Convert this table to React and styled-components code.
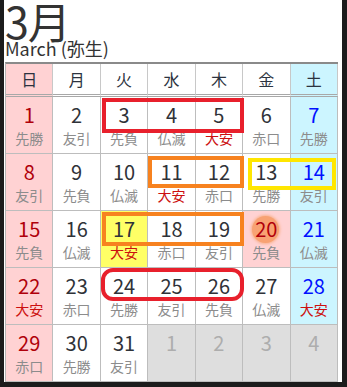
import styled, { createGlobalStyle } from 'styled-components';

const GlobalStyle = createGlobalStyle`
  html, body {
    margin: 0;
    padding: 0;
    background: #1c1c1c;
  }
  body {
    font-family: "Noto Sans CJK JP", "Noto Sans", sans-serif;
  }
`;

const Page = styled.div`
  width: 338px;
  margin-left: 4px;
  background: #fff;
  color: #333;
`;

const MonthTitle = styled.div`
  font-size: 43px;
  line-height: 40px;
  height: 38px;
  padding-left: 1px;
  letter-spacing: -1px;
  color: #333;
`;

const MonthSub = styled.div`
  font-size: 18px;
  line-height: 20px;
  padding-left: 1px;
  color: #333;
`;

const Grid = styled.div`
  display: grid;
  width: 332px;
  margin: 4px 0 0 1px;
  grid-template-columns: repeat(7, 1fr);
  grid-template-rows: 33px repeat(5, 57px);
  border-top: 2px solid #8a8a8a;
  border-left: 1px solid #b5b5b5;
`;

const HeadCell = styled.div`
  grid-row: 1;
  grid-column: ${p => p.$col};
  display: flex;
  align-items: center;
  justify-content: center;
  font-size: 16px;
  color: #2c3340;
  border-right: 1px solid #c8c8c8;
  border-bottom: 3px double #a8a8a8;
  background: ${p => (p.$col === 1 ? '#ffd2d3' : p.$col === 7 ? '#ccf5ff' : '#fff')};
`;

const dayBg = p => {
  if (p.$other) return '#dedede';
  if (p.$yellow) return '#ffff66';
  if (p.$holiday || p.$col === 1) return '#ffd2d3';
  if (p.$col === 7) return '#ccf5ff';
  return '#fff';
};

const DayCell = styled.div`
  grid-row: ${p => p.$row};
  grid-column: ${p => p.$col};
  display: flex;
  flex-direction: column;
  align-items: center;
  padding-top: 4px;
  border-right: 1px solid #bdbdbd;
  border-bottom: 1px solid #bdbdbd;
  background: ${dayBg};
`;

const numColor = p => {
  if (p.$other) return '#adadad';
  if (p.$holiday || p.$col === 1) return '#b0000a';
  if (p.$col === 7) return '#0010ff';
  return '#2f3238';
};

const DayNum = styled.div`
  position: relative;
  font-size: 20px;
  line-height: 28px;
  color: ${numColor};
  z-index: 1;

  &::before {
    content: '';
    display: ${p => (p.$holiday ? 'block' : 'none')};
    position: absolute;
    left: 50%;
    top: 50%;
    width: 27px;
    height: 27px;
    margin: -13px 0 0 -14px;
    border-radius: 50%;
    background: #f8a273;
    box-shadow: 0 0 3px 1px #f8b08a;
    z-index: -1;
  }
`;

const Rokuyo = styled.div`
  font-size: 14px;
  line-height: 20px;
  margin-top: -1px;
  color: ${p => (p.$lucky ? '#cc1010' : '#8c8c8c')};
`;

const Mark = styled.div`
  grid-row: ${p => p.$row};
  grid-column: ${p => p.$cols};
  align-self: start;
  height: ${p => p.$h}px;
  margin: ${p => p.$m};
  border: 4px solid ${p => p.$color};
  border-radius: ${p => p.$radius || 0}px;
  box-sizing: border-box;
  z-index: 2;
  pointer-events: none;
`;

const heads = ['日', '月', '火', '水', '木', '金', '土'];

const weeks = [
  [[1, '先勝'], [2, '友引'], [3, '先負'], [4, '仏滅'], [5, '大安'], [6, '赤口'], [7, '先勝']],
  [[8, '友引'], [9, '先負'], [10, '仏滅'], [11, '大安'], [12, '赤口'], [13, '先勝'], [14, '友引']],
  [[15, '先負'], [16, '仏滅'], [17, '大安'], [18, '赤口'], [19, '友引'], [20, '先負'], [21, '仏滅']],
  [[22, '大安'], [23, '赤口'], [24, '先勝'], [25, '友引'], [26, '先負'], [27, '仏滅'], [28, '大安']],
  [[29, '赤口'], [30, '先勝'], [31, '友引'], [1, '', true], [2, '', true], [3, '', true], [4, '', true]],
];

const marks = [
  { row: 2, cols: '3 / 6', h: 35, m: '1px -1px 0 1px', color: '#e8202c' },
  { row: 3, cols: '4 / 6', h: 32, m: '2px -1px 0 0', color: '#f7821f' },
  { row: 3, cols: '6 / 8', h: 32, m: '4px 2px 0 5px', color: '#ffe600' },
  { row: 4, cols: '3 / 6', h: 34, m: '1px -1px 0 1px', color: '#f7821f' },
  { row: 5, cols: '3 / 6', h: 33, m: '0 -1px 0 0', color: '#e8202c', radius: 12 },
];

export default function App() {
  return (
    <>
      <GlobalStyle />
      <Page>
        <MonthTitle>3月</MonthTitle>
        <MonthSub>March (弥生)</MonthSub>
        <Grid>
          {heads.map((h, i) => (
            <HeadCell key={h} $col={i + 1}>{h}</HeadCell>
          ))}
          {weeks.map((week, r) =>
            week.map(([n, rk, other], c) => {
              const holiday = n === 20 && !other;
              const yellow = n === 17 && !other;
              return (
                <DayCell
                  key={`${r}-${c}`}
                  $row={r + 2}
                  $col={c + 1}
                  $other={other}
                  $holiday={holiday}
                  $yellow={yellow}
                >
                  <DayNum $col={c + 1} $other={other} $holiday={holiday}>{n}</DayNum>
                  {rk && <Rokuyo $lucky={rk === '大安'}>{rk}</Rokuyo>}
                </DayCell>
              );
            })
          )}
          {marks.map((mk, i) => (
            <Mark key={i} $row={mk.row} $cols={mk.cols} $h={mk.h} $m={mk.m} $color={mk.color} $radius={mk.radius} />
          ))}
        </Grid>
      </Page>
    </>
  );
}
